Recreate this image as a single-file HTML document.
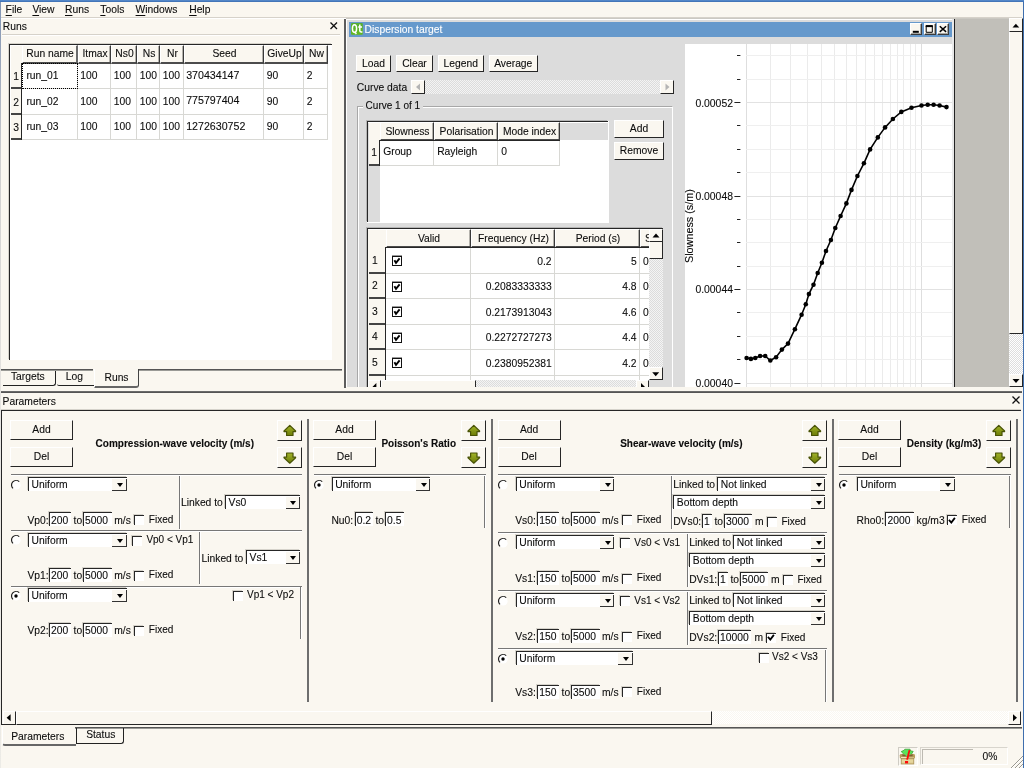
<!DOCTYPE html>
<html><head><meta charset="utf-8"><title>Dispersion</title>
<style>
html,body{margin:0;padding:0}
body{width:1024px;height:768px;overflow:hidden;background:#faf7f0;position:relative;font-family:"Liberation Sans",sans-serif;font-size:10.3px;color:#0c0c0c;-webkit-text-stroke:0.1px}
#w{position:absolute;left:0;top:0;width:1024px;height:768px;will-change:transform}
.a{position:absolute;box-sizing:border-box}
.t{line-height:12px;white-space:nowrap}
u{text-decoration:underline;text-underline-offset:1.5px;text-decoration-thickness:1px}
.btn{background:#faf7f0;border-top:1px solid #fff;border-left:1px solid #fff;border-right:1px solid #262626;border-bottom:1px solid #262626;text-align:center;white-space:nowrap;overflow:hidden}
.btn svg{display:block}
.hd{background:#faf7f0;border-left:1px solid #fff;border-top:1px solid #fff;border-right:1px solid #3a3a3a;box-shadow:inset -1px 0 0 #b4b2ac;border-bottom:2px solid #4c4c4c;text-align:center;line-height:17px;padding-left:1px;white-space:nowrap;overflow:hidden}
.rh{background:#faf7f0;border-bottom:2px solid #444;text-align:center;overflow:hidden}
.cell{background:#fff;border-right:1px solid #d8d8d4;border-bottom:1px solid #d8d8d4;padding-left:2.8px;white-space:nowrap}
.cell.r{text-align:right;padding-right:2.4px;padding-left:0}
.tab{text-align:center;line-height:12.5px;border-right:1px solid #222;border-bottom:1px solid #222;border-radius:0 0 3px 0}
.tab.nr{border-right:none;border-radius:0 0 0 2px}
.tab.sel{border-right:1.5px solid #444;border-bottom:2px solid #666;border-left:1px solid #fff}
.tab.b2{border-left:1px solid #222}
.combo{background:#fff;border-top:1px solid #262626;border-left:1px solid #262626;box-shadow:-1px -1px 0 #d6d3cb}
.combo span{position:absolute;left:2.8px;top:-.2px;line-height:12px;white-space:nowrap}
.combo i{position:absolute;right:0;top:1px;width:13.5px;bottom:0;background:#faf7f0;border-right:1.5px solid #333;border-bottom:1.5px solid #333}
.combo b{position:absolute;right:3.6px;top:5px;width:0;height:0;border-left:3.5px solid transparent;border-right:3.5px solid transparent;border-top:4px solid #000}
.inp{background:#fff;border-top:1px solid #262626;border-left:1px solid #262626;box-shadow:-1px -1px 0 #d6d3cb;line-height:14.4px;padding-left:1.2px;white-space:nowrap;overflow:hidden}
.chk{width:10px;height:10px;background:#fff;border-top:1px solid #262626;border-left:1px solid #262626;box-shadow:-1px -1px 0 #d6d3cb}
.chk svg{position:absolute;left:-.5px;top:-.5px}
.tchk{width:10px;height:10px;background:#fff;border:1px solid #111;box-shadow:0 -1px 0 #999}
.tchk svg{position:absolute;left:-1px;top:-1px}
.dith{background-image:conic-gradient(#fff 25%,#dedede 0 50%,#fff 0 75%,#dedede 0);background-size:2px 2px}
.dith2{background-image:conic-gradient(#f4f4f4 25%,#dcdcdc 0 50%,#f4f4f4 0 75%,#dcdcdc 0);background-size:2px 2px}
.dith3{background-image:conic-gradient(#fff 25%,#faf7f0 0 50%,#fff 0 75%,#faf7f0 0);background-size:2px 2px}
</style></head>
<body>
<div id="w">
<div class="a " style="left:0px;top:0px;width:1024px;height:2px;background:linear-gradient(#5a8fd0,#3b6db0)"></div>
<div class="a " style="left:0px;top:2px;width:1px;height:766px;background:linear-gradient(#8094b4 0,#9aa6ba 60px,#cfcfcf 160px,#e6e4e0 400px,#ecebe6 100%)"></div>
<div class="a " style="left:1023px;top:2px;width:1px;height:766px;background:#3f6fae"></div>
<div class="a t " style="left:5.6px;top:4px;"><u>F</u>ile</div>
<div class="a t " style="left:32.4px;top:4px;"><u>V</u>iew</div>
<div class="a t " style="left:65px;top:4px;"><u>R</u>uns</div>
<div class="a t " style="left:100.3px;top:4px;"><u>T</u>ools</div>
<div class="a t " style="left:135.6px;top:4px;"><u>W</u>indows</div>
<div class="a t " style="left:189.2px;top:4px;"><u>H</u>elp</div>
<div class="a " style="left:1px;top:17px;width:1021px;height:1px;background:#d6d2ca"></div>
<div class="a " style="left:1px;top:18px;width:1021px;height:1px;background:#ffffff"></div>
<div class="a t " style="left:2.8px;top:21px;">Runs</div>
<svg class="a" style="left:329px;top:21px" width="10" height="10" viewBox="0 0 10 10"><path d="M1.5 1.5 L8 8 M8 1.5 L1.5 8" stroke="#111" stroke-width="1.3" fill="none"/></svg>
<div class="a " style="left:2px;top:34px;width:338px;height:1px;background:#d6d2ca"></div>
<div class="a " style="left:2px;top:35px;width:338px;height:1px;background:#ffffff"></div>
<div class="a " style="left:9px;top:44px;width:323px;height:316px;background:#fff;border-top:1px solid #262626;border-left:1px solid #262626;box-shadow:-1px -1px 0 #d6d3cb"></div>
<div class="a " style="left:11px;top:46px;width:11px;height:93px;background:#faf7f0"></div>
<div class="a hd" style="left:22px;top:45px;width:56px;height:19px;line-height:16px;border-right:2px solid #6a6a6a;box-shadow:none">Run name</div>
<div class="a hd" style="left:78px;top:45px;width:33px;height:19px;line-height:16px">Itmax</div>
<div class="a hd" style="left:111px;top:45px;width:26px;height:19px;line-height:16px">Ns0</div>
<div class="a hd" style="left:137px;top:45px;width:23px;height:19px;line-height:16px">Ns</div>
<div class="a hd" style="left:160px;top:45px;width:24px;height:19px;line-height:16px">Nr</div>
<div class="a hd" style="left:184px;top:45px;width:80px;height:19px;line-height:16px">Seed</div>
<div class="a hd" style="left:264px;top:45px;width:40px;height:19px;line-height:16px">GiveUp</div>
<div class="a hd" style="left:304px;top:45px;width:24px;height:19px;line-height:16px">Nw</div>
<div class="a rh" style="left:11px;top:64px;width:10px;height:25px;line-height:26px">1</div>
<div class="a cell" style="left:22px;top:64px;width:56px;height:25px;line-height:24.5px;padding-left:4.4px;">run_01</div>
<div class="a cell" style="left:78px;top:64px;width:33px;height:25px;line-height:24.5px;padding-left:2.2px;">100</div>
<div class="a cell" style="left:111px;top:64px;width:26px;height:25px;line-height:24.5px;">100</div>
<div class="a cell" style="left:137px;top:64px;width:23px;height:25px;line-height:24.5px;">100</div>
<div class="a cell" style="left:160px;top:64px;width:24px;height:25px;line-height:24.5px;">100</div>
<div class="a cell" style="left:184px;top:64px;width:80px;height:25px;line-height:24.5px;padding-left:2.2px;font-size:10.65px;line-height:22.5px;">370434147</div>
<div class="a cell" style="left:264px;top:64px;width:40px;height:25px;line-height:24.5px;">90</div>
<div class="a cell" style="left:304px;top:64px;width:24px;height:25px;line-height:24.5px;">2</div>
<div class="a rh" style="left:11px;top:89px;width:10px;height:26px;line-height:27px">2</div>
<div class="a cell" style="left:22px;top:89px;width:56px;height:26px;line-height:25.5px;padding-left:4.4px;">run_02</div>
<div class="a cell" style="left:78px;top:89px;width:33px;height:26px;line-height:25.5px;padding-left:2.2px;">100</div>
<div class="a cell" style="left:111px;top:89px;width:26px;height:26px;line-height:25.5px;">100</div>
<div class="a cell" style="left:137px;top:89px;width:23px;height:26px;line-height:25.5px;">100</div>
<div class="a cell" style="left:160px;top:89px;width:24px;height:26px;line-height:25.5px;">100</div>
<div class="a cell" style="left:184px;top:89px;width:80px;height:26px;line-height:25.5px;padding-left:2.2px;font-size:10.65px;line-height:23.5px;">775797404</div>
<div class="a cell" style="left:264px;top:89px;width:40px;height:26px;line-height:25.5px;">90</div>
<div class="a cell" style="left:304px;top:89px;width:24px;height:26px;line-height:25.5px;">2</div>
<div class="a rh" style="left:11px;top:115px;width:10px;height:25px;line-height:26px">3</div>
<div class="a cell" style="left:22px;top:115px;width:56px;height:25px;line-height:24.5px;padding-left:4.4px;">run_03</div>
<div class="a cell" style="left:78px;top:115px;width:33px;height:25px;line-height:24.5px;padding-left:2.2px;">100</div>
<div class="a cell" style="left:111px;top:115px;width:26px;height:25px;line-height:24.5px;">100</div>
<div class="a cell" style="left:137px;top:115px;width:23px;height:25px;line-height:24.5px;">100</div>
<div class="a cell" style="left:160px;top:115px;width:24px;height:25px;line-height:24.5px;">100</div>
<div class="a cell" style="left:184px;top:115px;width:80px;height:25px;line-height:24.5px;padding-left:2.2px;font-size:10.65px;line-height:22.5px;">1272630752</div>
<div class="a cell" style="left:264px;top:115px;width:40px;height:25px;line-height:24.5px;">90</div>
<div class="a cell" style="left:304px;top:115px;width:24px;height:25px;line-height:24.5px;">2</div>
<div class="a " style="left:21px;top:63px;width:1px;height:77px;background:#262626"></div>
<div class="a " style="left:22px;top:63px;width:56px;height:26px;border:1px dotted #000"></div>
<div class="a " style="left:1px;top:369px;width:92px;height:1px;background:#555"></div>
<div class="a " style="left:1px;top:370px;width:92px;height:1px;background:#9a9a96"></div>
<div class="a " style="left:139px;top:369px;width:203px;height:1px;background:#555"></div>
<div class="a " style="left:139px;top:370px;width:203px;height:1px;background:#9a9a96"></div>
<div class="a tab" style="left:3px;top:371px;width:53px;height:15px;padding-right:2.4px">Targets</div>
<div class="a tab nr" style="left:57px;top:371px;width:37px;height:15px;padding-right:2.4px">Log</div>
<div class="a tab sel" style="left:94px;top:369px;width:45px;height:19px;line-height:17px">Runs</div>
<div class="a " style="left:344px;top:19px;width:2px;height:369px;background:#5c5c5c"></div>
<div class="a " style="left:346px;top:18px;width:663px;height:369px;background:#c1bfb9"></div>
<div class="a " style="left:346px;top:18px;width:663px;height:1px;background:#cbc9c3"></div>
<div class="a " style="left:346px;top:19px;width:608px;height:368px;background:#dcdcdc;border-left:1px solid #fff;border-top:1px solid #fff"></div>
<div class="a " style="left:954px;top:19px;width:1px;height:368px;background:#222"></div>
<div class="a " style="left:349px;top:22px;width:603px;height:15px;background:#6699cc"></div>
<svg class="a" style="left:350.7px;top:23.4px" width="12" height="12" viewBox="0 0 12 12"><defs><linearGradient id="qg" x1="0" y1="0" x2="0" y2="1"><stop offset="0" stop-color="#57ae32"/><stop offset="1" stop-color="#62b81c"/></linearGradient></defs><rect x="0" y="0" width="11.8" height="11.8" rx="1" fill="url(#qg)"/><ellipse cx="3.5" cy="5.6" rx="2.1" ry="3.8" fill="none" stroke="#fff" stroke-width="1.5"/><path d="M3.6 8.6 L5.4 11" stroke="#fff" stroke-width="1.4" fill="none"/><path d="M8.8 1.4 V7.8 Q8.8 9 10.2 9 H11.4 M7.2 3.9 H11" stroke="#fff" stroke-width="1.5" fill="none"/></svg>
<div class="a t " style="left:364.6px;top:24px;color:#fff">Dispersion target</div>
<div class="a btn" style="left:910.2px;top:23px;width:11.4px;height:12px;border-right-color:#3c3c3c;border-bottom-color:#3c3c3c;box-shadow:inset -1px -1px 0 #a8a6a0"><svg width="11" height="11" viewBox="0 0 11 11" style="position:absolute;left:0;top:0"><path d="M1.8 7.8 H7.8" stroke="#000" stroke-width="2"/></svg></div>
<div class="a btn" style="left:924.2px;top:23px;width:11.4px;height:12px;border-right-color:#3c3c3c;border-bottom-color:#3c3c3c;box-shadow:inset -1px -1px 0 #a8a6a0"><svg width="11" height="11" viewBox="0 0 11 11" style="position:absolute;left:0;top:0"><path d="M1.2 2 H7.3 V8.3 H1.2 Z" fill="none" stroke="#000" stroke-width="1"/><path d="M0.7 2.1 H7.8" stroke="#000" stroke-width="2"/></svg></div>
<div class="a btn" style="left:937.4px;top:23px;width:11.4px;height:12px;border-right-color:#3c3c3c;border-bottom-color:#3c3c3c;box-shadow:inset -1px -1px 0 #a8a6a0"><svg width="11" height="11" viewBox="0 0 11 11" style="position:absolute;left:0;top:0"><path d="M1.8 2.3 L8.1 7.9 M8.1 2.3 L1.8 7.9" stroke="#000" stroke-width="1.5"/></svg></div>
<div class="a " style="left:952px;top:19px;width:2px;height:368px;background:#e9e9e9"></div>
<div class="a " style="left:1009px;top:18px;width:14px;height:369px;background:#faf7f0"></div>
<div class="a dith" style="left:1009px;top:334px;width:14px;height:40px;"></div>
<div class="a btn" style="left:1009px;top:18px;width:14px;height:14px;line-height:12px;"><svg width="13" height="12" viewBox="0 0 13 12" style="position:absolute;left:-1px;top:0"><path d="M3.5 8.6 L6.9 4.8 L10.3 8.6 Z" fill="#000"/></svg></div>
<div class="a " style="left:1009px;top:32px;width:14px;height:302px;background:#faf7f0;border-left:1px solid #fff;border-right:1px solid #262626;border-bottom:1px solid #262626"></div>
<div class="a btn" style="left:1009px;top:374px;width:14px;height:13px;line-height:11px;"><svg width="13" height="11" viewBox="0 0 13 11" style="position:absolute;left:-1px;top:0"><path d="M3.5 4 L10.5 4 L7 8 Z" fill="#000"/></svg></div>
<div class="a btn" style="left:356px;top:55px;width:35px;height:17px;line-height:15px;">Load</div>
<div class="a btn" style="left:396px;top:55px;width:37px;height:17px;line-height:15px;">Clear</div>
<div class="a btn" style="left:437.5px;top:55px;width:46.5px;height:17px;line-height:15px;">Legend</div>
<div class="a btn" style="left:489px;top:55px;width:48.5px;height:17px;line-height:15px;">Average</div>
<div class="a t " style="left:356.8px;top:82px;">Curve data</div>
<div class="a dith2" style="left:425px;top:80px;width:235px;height:14px;"></div>
<div class="a btn" style="left:411px;top:80px;width:14px;height:14px;line-height:12px;"><svg width="12" height="12" viewBox="0 0 12 12" style="position:absolute;left:0;top:0"><path d="M8 2.5 L8 9.5 L4 6 Z" fill="#b4b4b4"/></svg></div>
<div class="a btn" style="left:660px;top:80px;width:14px;height:14px;line-height:12px;"><svg width="12" height="12" viewBox="0 0 12 12" style="position:absolute;left:0;top:0"><path d="M4.5 2.5 L4.5 9.5 L8.5 6 Z" fill="#b4b4b4"/></svg></div>
<div class="a " style="left:357px;top:106px;width:316px;height:285px;border:1px solid #a8a8a8;border-right-color:#fff;box-shadow:inset 1px 1px 0 #fff"></div>
<div class="a " style="left:363px;top:99px;width:59.5px;height:12px;background:#dcdcdc"></div>
<div class="a t " style="left:365.6px;top:100px;font-size:10px">Curve 1 of 1</div>
<div class="a " style="left:367px;top:121px;width:241px;height:101px;background:#fff;border-top:1px solid #262626;border-left:1px solid #262626;box-shadow:-1px -1px 0 #b4b4b4"></div>
<div class="a " style="left:608px;top:121px;width:1px;height:102px;background:#fff"></div>
<div class="a " style="left:367px;top:222px;width:242px;height:1px;background:#fff"></div>
<div class="a " style="left:369px;top:123px;width:239px;height:17px;background:#dcdcdc"></div>
<div class="a " style="left:368px;top:123px;width:12px;height:99px;background:#dcdcdc"></div>
<div class="a " style="left:369px;top:123px;width:11px;height:43px;background:#faf7f0"></div>
<div class="a hd" style="left:380px;top:122px;width:54px;height:19px;">Slowness</div>
<div class="a hd" style="left:434px;top:122px;width:64px;height:19px;">Polarisation</div>
<div class="a hd" style="left:498px;top:122px;width:62px;height:19px;">Mode index</div>
<div class="a rh" style="left:369px;top:141px;width:10px;height:25px;line-height:24px">1</div>
<div class="a cell" style="left:380px;top:141px;width:54px;height:25px;line-height:22.5px;padding-left:3.2px">Group</div>
<div class="a cell" style="left:434px;top:141px;width:64px;height:25px;line-height:22.5px;padding-left:3.2px">Rayleigh</div>
<div class="a cell" style="left:498px;top:141px;width:62px;height:25px;line-height:22.5px;padding-left:3.2px">0</div>
<div class="a " style="left:379px;top:140px;width:1px;height:26px;background:#262626"></div>
<div class="a " style="left:380px;top:140px;width:180px;height:1px;background:#262626"></div>
<div class="a btn" style="left:614px;top:120px;width:50px;height:18px;line-height:16px;">Add</div>
<div class="a btn" style="left:614px;top:142px;width:50px;height:18px;line-height:16px;">Remove</div>
<div class="a " style="left:367px;top:228px;width:295.5px;height:160px;background:#fff;border-top:1px solid #262626;border-left:1px solid #262626;box-shadow:-1px -1px 0 #b4b4b4"></div>
<div class="a " style="left:369px;top:230px;width:280px;height:18px;background:#faf7f0"></div>
<div class="a " style="left:368px;top:230px;width:17px;height:150px;background:#faf7f0"></div>
<div class="a hd" style="left:386px;top:229px;width:85px;height:19px;">Valid</div>
<div class="a hd" style="left:471px;top:229px;width:84px;height:19px;">Frequency (Hz)</div>
<div class="a hd" style="left:555px;top:229px;width:85px;height:19px;">Period (s)</div>
<div class="a hd" style="left:640px;top:229px;width:10px;height:19px;border-right:none;text-align:left;text-indent:3px">S</div>
<div class="a rh" style="left:369px;top:248px;width:16px;height:26px;line-height:25px;text-indent:3px;text-align:left">1</div>
<div class="a cell" style="left:386px;top:248px;width:85px;height:26px"></div>
<div class="a cell r" style="left:471px;top:248px;width:84px;height:26px;line-height:27.5px">0.2</div>
<div class="a cell r" style="left:555px;top:248px;width:85px;height:26px;line-height:27.5px">5</div>
<div class="a cell" style="left:640px;top:248px;width:9px;height:26px;line-height:27.5px;border-right:none;overflow:hidden;padding-left:3px">0</div>
<div class="a tchk" style="left:392px;top:256px"><svg viewBox="0 0 10 10" width="10" height="10"><path d="M2.4 4.2 L4 6.8 L7.6 2.4" fill="none" stroke="#000" stroke-width="1.9"/></svg></div>
<div class="a rh" style="left:369px;top:274px;width:16px;height:25px;line-height:24px;text-indent:3px;text-align:left">2</div>
<div class="a cell" style="left:386px;top:274px;width:85px;height:25px"></div>
<div class="a cell r" style="left:471px;top:274px;width:84px;height:25px;line-height:26.5px">0.2083333333</div>
<div class="a cell r" style="left:555px;top:274px;width:85px;height:25px;line-height:26.5px">4.8</div>
<div class="a cell" style="left:640px;top:274px;width:9px;height:25px;line-height:26.5px;border-right:none;overflow:hidden;padding-left:3px">0</div>
<div class="a tchk" style="left:392px;top:282px"><svg viewBox="0 0 10 10" width="10" height="10"><path d="M2.4 4.2 L4 6.8 L7.6 2.4" fill="none" stroke="#000" stroke-width="1.9"/></svg></div>
<div class="a rh" style="left:369px;top:299px;width:16px;height:26px;line-height:25px;text-indent:3px;text-align:left">3</div>
<div class="a cell" style="left:386px;top:299px;width:85px;height:26px"></div>
<div class="a cell r" style="left:471px;top:299px;width:84px;height:26px;line-height:27.5px">0.2173913043</div>
<div class="a cell r" style="left:555px;top:299px;width:85px;height:26px;line-height:27.5px">4.6</div>
<div class="a cell" style="left:640px;top:299px;width:9px;height:26px;line-height:27.5px;border-right:none;overflow:hidden;padding-left:3px">0</div>
<div class="a tchk" style="left:392px;top:307px"><svg viewBox="0 0 10 10" width="10" height="10"><path d="M2.4 4.2 L4 6.8 L7.6 2.4" fill="none" stroke="#000" stroke-width="1.9"/></svg></div>
<div class="a rh" style="left:369px;top:325px;width:16px;height:25px;line-height:24px;text-indent:3px;text-align:left">4</div>
<div class="a cell" style="left:386px;top:325px;width:85px;height:25px"></div>
<div class="a cell r" style="left:471px;top:325px;width:84px;height:25px;line-height:26.5px">0.2272727273</div>
<div class="a cell r" style="left:555px;top:325px;width:85px;height:25px;line-height:26.5px">4.4</div>
<div class="a cell" style="left:640px;top:325px;width:9px;height:25px;line-height:26.5px;border-right:none;overflow:hidden;padding-left:3px">0</div>
<div class="a tchk" style="left:392px;top:333px"><svg viewBox="0 0 10 10" width="10" height="10"><path d="M2.4 4.2 L4 6.8 L7.6 2.4" fill="none" stroke="#000" stroke-width="1.9"/></svg></div>
<div class="a rh" style="left:369px;top:350px;width:16px;height:26px;line-height:25px;text-indent:3px;text-align:left">5</div>
<div class="a cell" style="left:386px;top:350px;width:85px;height:26px"></div>
<div class="a cell r" style="left:471px;top:350px;width:84px;height:26px;line-height:27.5px">0.2380952381</div>
<div class="a cell r" style="left:555px;top:350px;width:85px;height:26px;line-height:27.5px">4.2</div>
<div class="a cell" style="left:640px;top:350px;width:9px;height:26px;line-height:27.5px;border-right:none;overflow:hidden;padding-left:3px">0</div>
<div class="a tchk" style="left:392px;top:358px"><svg viewBox="0 0 10 10" width="10" height="10"><path d="M2.4 4.2 L4 6.8 L7.6 2.4" fill="none" stroke="#000" stroke-width="1.9"/></svg></div>
<div class="a rh" style="left:369px;top:376px;width:16px;height:26px;line-height:25px;text-indent:3px;text-align:left"></div>
<div class="a cell" style="left:386px;top:376px;width:85px;height:26px"></div>
<div class="a cell r" style="left:471px;top:376px;width:84px;height:26px;line-height:27.5px"></div>
<div class="a cell r" style="left:555px;top:376px;width:85px;height:26px;line-height:27.5px"></div>
<div class="a cell" style="left:640px;top:376px;width:9px;height:26px;line-height:27.5px;border-right:none;overflow:hidden;padding-left:3px"></div>
<div class="a " style="left:385px;top:247px;width:1px;height:133px;background:#262626"></div>
<div class="a " style="left:386px;top:247px;width:263px;height:1px;background:#262626"></div>
<div class="a dith2" style="left:649px;top:229px;width:13.5px;height:151px;"></div>
<div class="a btn" style="left:649px;top:229px;width:13.5px;height:13px;line-height:11px;"><svg width="13" height="11" viewBox="0 0 13 11" style="position:absolute;left:-1px;top:0"><path d="M3.5 7.5 L7 3.5 L10.5 7.5 Z" fill="#000"/></svg></div>
<div class="a " style="left:649px;top:242px;width:13.5px;height:17px;background:#faf7f0;border-left:1px solid #fff;border-right:1px solid #262626;border-bottom:1px solid #262626"></div>
<div class="a btn" style="left:649px;top:367px;width:13.5px;height:13px;line-height:11px;"><svg width="13" height="11" viewBox="0 0 13 11" style="position:absolute;left:-1px;top:0"><path d="M3.2 4.2 L10.2 4.2 L6.7 8.2 Z" fill="#000"/></svg></div>
<div class="a dith2" style="left:368px;top:380px;width:281px;height:13px;"></div>
<div class="a btn" style="left:368px;top:380px;width:13px;height:13px;line-height:11px;"><svg width="13" height="13" viewBox="0 0 13 13" style="position:absolute;left:-1px;top:-1px"><path d="M8.4 3 L8.4 10.4 L4.6 6.7 Z" fill="#000"/></svg></div>
<div class="a " style="left:381px;top:380px;width:95px;height:13px;background:#faf7f0;border-left:1px solid #fff;border-right:1px solid #262626;border-top:1px solid #fff"></div>
<div class="a btn" style="left:636px;top:380px;width:13px;height:13px;line-height:11px;"><svg width="13" height="13" viewBox="0 0 13 13" style="position:absolute;left:-1px;top:-1px"><path d="M5 3 L5 10.4 L8.8 6.7 Z" fill="#000"/></svg></div>
<div class="a " style="left:649px;top:380px;width:13.5px;height:13px;background:#dcdcdc"></div>
<svg class="a" style="left:685px;top:44px" width="267" height="344" viewBox="685 44 267 344"><rect x="685" y="44" width="267" height="344" fill="#fff"/><rect x="746" y="44" width="1" height="344" fill="#dedede"/><rect x="770" y="44" width="1" height="344" fill="#ebebeb"/><rect x="790" y="44" width="1" height="344" fill="#ebebeb"/><rect x="807" y="44" width="1" height="344" fill="#ebebeb"/><rect x="821" y="44" width="1" height="344" fill="#ebebeb"/><rect x="834" y="44" width="1" height="344" fill="#ebebeb"/><rect x="846" y="44" width="1" height="344" fill="#ebebeb"/><rect x="856" y="44" width="1" height="344" fill="#ebebeb"/><rect x="865" y="44" width="1" height="344" fill="#ebebeb"/><rect x="874" y="44" width="1" height="344" fill="#ebebeb"/><rect x="882" y="44" width="1" height="344" fill="#ebebeb"/><rect x="890" y="44" width="1" height="344" fill="#ebebeb"/><rect x="897" y="44" width="1" height="344" fill="#ebebeb"/><rect x="903" y="44" width="1" height="344" fill="#ebebeb"/><rect x="910" y="44" width="1" height="344" fill="#ebebeb"/><rect x="915" y="44" width="1" height="344" fill="#ebebeb"/><rect x="921" y="44" width="1" height="344" fill="#dedede"/><rect x="746" y="55" width="206" height="1" fill="#efefef"/><rect x="737" y="55" width="3.4" height="1" fill="#222"/><rect x="746" y="79" width="206" height="1" fill="#efefef"/><rect x="737" y="79" width="3.4" height="1" fill="#222"/><rect x="746" y="102" width="206" height="1" fill="#e2e2e2"/><rect x="734.4" y="102" width="6.0" height="1" fill="#222"/><rect x="746" y="125" width="206" height="1" fill="#efefef"/><rect x="737" y="125" width="3.4" height="1" fill="#222"/><rect x="746" y="149" width="206" height="1" fill="#efefef"/><rect x="737" y="149" width="3.4" height="1" fill="#222"/><rect x="746" y="172" width="206" height="1" fill="#efefef"/><rect x="737" y="172" width="3.4" height="1" fill="#222"/><rect x="746" y="196" width="206" height="1" fill="#e2e2e2"/><rect x="734.4" y="196" width="6.0" height="1" fill="#222"/><rect x="746" y="219" width="206" height="1" fill="#efefef"/><rect x="737" y="219" width="3.4" height="1" fill="#222"/><rect x="746" y="242" width="206" height="1" fill="#efefef"/><rect x="737" y="242" width="3.4" height="1" fill="#222"/><rect x="746" y="266" width="206" height="1" fill="#efefef"/><rect x="737" y="266" width="3.4" height="1" fill="#222"/><rect x="746" y="289" width="206" height="1" fill="#e2e2e2"/><rect x="734.4" y="289" width="6.0" height="1" fill="#222"/><rect x="746" y="312" width="206" height="1" fill="#efefef"/><rect x="737" y="312" width="3.4" height="1" fill="#222"/><rect x="746" y="336" width="206" height="1" fill="#efefef"/><rect x="737" y="336" width="3.4" height="1" fill="#222"/><rect x="746" y="359" width="206" height="1" fill="#efefef"/><rect x="737" y="359" width="3.4" height="1" fill="#222"/><rect x="746" y="383" width="206" height="1" fill="#e2e2e2"/><rect x="734.4" y="383" width="6.0" height="1" fill="#222"/><polyline fill="none" stroke="#000" stroke-width="1.6" points="746.6,358.0 750.9,358.9 755.3,358.0 760.1,356.0 765.2,356.0 770.3,360.5 776.1,357.2 781.9,349.6 788.0,343.6 794.9,329.2 801.6,314.7 805.8,304.2 808.9,294.1 813.5,284.7 817.7,273 821.9,262.8 826.0,251.0 830.9,240 835.3,228 840.6,216 846.4,203.4 851.5,189.9 857.4,176 863.9,163.3 870.1,149.4 877.8,137.4 885.1,127.4 892.9,119 901.3,111.9 911.5,107.7 921.5,105.5 927.7,104.8 933.6,104.8 939.6,105.5 946.5,107.1"/><circle cx="746.6" cy="358.0" r="2.3" fill="#000"/><circle cx="750.9" cy="358.9" r="2.3" fill="#000"/><circle cx="755.3" cy="358.0" r="2.3" fill="#000"/><circle cx="760.1" cy="356.0" r="2.3" fill="#000"/><circle cx="765.2" cy="356.0" r="2.3" fill="#000"/><circle cx="770.3" cy="360.5" r="2.3" fill="#000"/><circle cx="776.1" cy="357.2" r="2.3" fill="#000"/><circle cx="781.9" cy="349.6" r="2.3" fill="#000"/><circle cx="788.0" cy="343.6" r="2.3" fill="#000"/><circle cx="794.9" cy="329.2" r="2.3" fill="#000"/><circle cx="801.6" cy="314.7" r="2.3" fill="#000"/><circle cx="805.8" cy="304.2" r="2.3" fill="#000"/><circle cx="808.9" cy="294.1" r="2.3" fill="#000"/><circle cx="813.5" cy="284.7" r="2.3" fill="#000"/><circle cx="817.7" cy="273" r="2.3" fill="#000"/><circle cx="821.9" cy="262.8" r="2.3" fill="#000"/><circle cx="826.0" cy="251.0" r="2.3" fill="#000"/><circle cx="830.9" cy="240" r="2.3" fill="#000"/><circle cx="835.3" cy="228" r="2.3" fill="#000"/><circle cx="840.6" cy="216" r="2.3" fill="#000"/><circle cx="846.4" cy="203.4" r="2.3" fill="#000"/><circle cx="851.5" cy="189.9" r="2.3" fill="#000"/><circle cx="857.4" cy="176" r="2.3" fill="#000"/><circle cx="863.9" cy="163.3" r="2.3" fill="#000"/><circle cx="870.1" cy="149.4" r="2.3" fill="#000"/><circle cx="877.8" cy="137.4" r="2.3" fill="#000"/><circle cx="885.1" cy="127.4" r="2.3" fill="#000"/><circle cx="892.9" cy="119" r="2.3" fill="#000"/><circle cx="901.3" cy="111.9" r="2.3" fill="#000"/><circle cx="911.5" cy="107.7" r="2.3" fill="#000"/><circle cx="921.5" cy="105.5" r="2.3" fill="#000"/><circle cx="927.7" cy="104.8" r="2.3" fill="#000"/><circle cx="933.6" cy="104.8" r="2.3" fill="#000"/><circle cx="939.6" cy="105.5" r="2.3" fill="#000"/><circle cx="946.5" cy="107.1" r="2.3" fill="#000"/></svg>
<div class="a t " style="left:695.4px;top:98px;font-size:10.4px">0.00052</div>
<div class="a t " style="left:695.4px;top:191px;font-size:10.4px">0.00048</div>
<div class="a t " style="left:695.4px;top:284px;font-size:10.4px">0.00044</div>
<div class="a t " style="left:695.4px;top:378px;font-size:10.4px">0.00040</div>
<div class="a t" style="left:683.4px;top:263px;width:12px;height:12px;transform:rotate(-90deg);transform-origin:0 0;white-space:nowrap;font-size:10.8px">Slowness (s/m)</div>
<div class="a " style="left:346px;top:387px;width:677px;height:22px;background:#faf7f0"></div>
<div class="a " style="left:1px;top:391px;width:1021px;height:1px;background:#6a6a6a"></div>
<div class="a " style="left:1px;top:392px;width:1021px;height:1px;background:#555"></div>
<div class="a t " style="left:2.6px;top:396px;">Parameters</div>
<svg class="a" style="left:1011px;top:395px" width="10" height="10" viewBox="0 0 10 10"><path d="M1.5 1.5 L8.5 8.5 M8.5 1.5 L1.5 8.5" stroke="#111" stroke-width="1.3" fill="none"/></svg>
<div class="a " style="left:1px;top:410px;width:1020px;height:1px;background:#262626"></div>
<div class="a " style="left:1px;top:409px;width:1020px;height:1px;background:#d6d3cb"></div>
<div class="a " style="left:1px;top:410px;width:1px;height:315px;background:#262626"></div>
<div class="a btn" style="left:10px;top:420px;width:63px;height:20px;line-height:18px;">Add</div>
<div class="a btn" style="left:10px;top:447px;width:63px;height:20px;line-height:18px;">Del</div>
<div class="a t " style="left:95.6px;top:438px;font-weight:bold;font-size:10px">Compression-wave velocity (m/s)</div>
<div class="a btn" style="left:277px;top:419.5px;width:25px;height:21px"><svg width="25" height="21" viewBox="0 0 25 21" style="position:absolute;left:-1px;top:-1px"><defs><linearGradient id="g277419" x1="0" y1="0" x2="0" y2="1"><stop offset="0" stop-color="#a2b428"/><stop offset="1" stop-color="#6c7c06"/></linearGradient></defs><path d="M12.8 5.4 L18.6 11 L18.6 11.6 L16 11.6 L16 15.5 L9.6 15.5 L9.6 11.6 L7 11.6 L7 11 Z" fill="url(#g277419)" stroke="#495306" stroke-width="1.2" stroke-linejoin="round"/></svg></div>
<div class="a btn" style="left:277px;top:446.5px;width:25px;height:21px"><svg width="25" height="21" viewBox="0 0 25 21" style="position:absolute;left:-1px;top:-1px"><defs><linearGradient id="g277446" x1="0" y1="0" x2="0" y2="1"><stop offset="0" stop-color="#a2b428"/><stop offset="1" stop-color="#6c7c06"/></linearGradient></defs><path d="M9.6 6 L16 6 L16 10.2 L18.6 10.2 L18.6 10.8 L12.8 16.2 L7 10.8 L7 10.2 L9.6 10.2 Z" fill="url(#g277446)" stroke="#495306" stroke-width="1.2" stroke-linejoin="round"/></svg></div>
<div class="a " style="left:306.7px;top:419px;width:2px;height:283px;background:#6e6e6e"></div>
<div class="a " style="left:11px;top:474px;width:291px;height:1px;background:#777"></div>
<div class="a " style="left:11px;top:475px;width:291px;height:1px;background:#fff"></div>
<svg class="a" style="left:9.6px;top:479px" width="12" height="12" viewBox="0 0 12 12"><circle cx="6.2" cy="6.2" r="4.4" fill="#fff"/><path d="M3.0 9.4 A4.5 4.5 0 0 1 9.2 2.7" fill="none" stroke="#1a1a1a" stroke-width="1.15"/></svg>
<div class="a combo" style="left:28px;top:477px;width:98.5px;height:14px"><i></i><b></b></div>
<div class="a t " style="left:31.6px;top:479px;">Uniform</div>
<div class="a t " style="left:27.4px;top:515px;">Vp0:</div>
<div class="a inp" style="left:49px;top:512.4px;width:22px;height:14px"></div>
<div class="a t " style="left:51.1px;top:515px;">200</div>
<div class="a t " style="left:73.6px;top:515px;">to</div>
<div class="a inp" style="left:83px;top:512.4px;width:28.5px;height:14px"></div>
<div class="a t " style="left:85.1px;top:515px;">5000</div>
<div class="a t " style="left:114.2px;top:515px;">m/s</div>
<div class="a chk" style="left:134px;top:515.0px"></div>
<div class="a t " style="left:148.8px;top:514px;font-size:10px">Fixed</div>
<div class="a " style="left:11px;top:530px;width:291px;height:1px;background:#777"></div>
<div class="a " style="left:11px;top:531px;width:291px;height:1px;background:#fff"></div>
<svg class="a" style="left:9.6px;top:534px" width="12" height="12" viewBox="0 0 12 12"><circle cx="6.2" cy="6.2" r="4.4" fill="#fff"/><path d="M3.0 9.4 A4.5 4.5 0 0 1 9.2 2.7" fill="none" stroke="#1a1a1a" stroke-width="1.15"/></svg>
<div class="a combo" style="left:28px;top:532.6px;width:98.5px;height:14px"><i></i><b></b></div>
<div class="a t " style="left:31.6px;top:535px;">Uniform</div>
<div class="a t " style="left:27.4px;top:570px;">Vp1:</div>
<div class="a inp" style="left:49px;top:568px;width:22px;height:14px"></div>
<div class="a t " style="left:51.1px;top:570px;">200</div>
<div class="a t " style="left:73.6px;top:570px;">to</div>
<div class="a inp" style="left:83px;top:568px;width:28.5px;height:14px"></div>
<div class="a t " style="left:85.1px;top:570px;">5000</div>
<div class="a t " style="left:114.2px;top:570px;">m/s</div>
<div class="a chk" style="left:134px;top:570.6px"></div>
<div class="a t " style="left:148.8px;top:569px;font-size:10px">Fixed</div>
<div class="a " style="left:11px;top:586px;width:291px;height:1px;background:#777"></div>
<div class="a " style="left:11px;top:587px;width:291px;height:1px;background:#fff"></div>
<svg class="a" style="left:9.6px;top:589.6px" width="12" height="12" viewBox="0 0 12 12"><circle cx="6.2" cy="6.2" r="4.4" fill="#fff"/><path d="M3.0 9.4 A4.5 4.5 0 0 1 9.2 2.7" fill="none" stroke="#1a1a1a" stroke-width="1.15"/><circle cx="6" cy="6" r="1.7" fill="#000"/></svg>
<div class="a combo" style="left:28px;top:588px;width:98.5px;height:14px"><i></i><b></b></div>
<div class="a t " style="left:31.6px;top:590px;">Uniform</div>
<div class="a t " style="left:27.4px;top:625px;">Vp2:</div>
<div class="a inp" style="left:49px;top:623px;width:22px;height:14px"></div>
<div class="a t " style="left:51.1px;top:625px;">200</div>
<div class="a t " style="left:73.6px;top:625px;">to</div>
<div class="a inp" style="left:83px;top:623px;width:28.5px;height:14px"></div>
<div class="a t " style="left:85.1px;top:625px;">5000</div>
<div class="a t " style="left:114.2px;top:625px;">m/s</div>
<div class="a chk" style="left:134px;top:625.6px"></div>
<div class="a t " style="left:148.8px;top:624px;font-size:10px">Fixed</div>
<div class="a " style="left:179px;top:476px;width:1px;height:53px;background:#777"></div>
<div class="a " style="left:180px;top:476px;width:1px;height:53px;background:#fff"></div>
<div class="a t " style="left:181px;top:497px;">Linked to</div>
<div class="a combo" style="left:225px;top:495px;width:75px;height:14px"><i></i><b></b></div>
<div class="a t " style="left:228.6px;top:497px;">Vs0</div>
<div class="a chk" style="left:132px;top:535.5px"></div>
<div class="a t " style="left:146.4px;top:534px;font-size:10px">Vp0 &lt; Vp1</div>
<div class="a " style="left:199px;top:532px;width:1px;height:52px;background:#777"></div>
<div class="a " style="left:200px;top:532px;width:1px;height:52px;background:#fff"></div>
<div class="a t " style="left:201.5px;top:553px;">Linked to</div>
<div class="a combo" style="left:246px;top:550.4px;width:54px;height:14px"><i></i><b></b></div>
<div class="a t " style="left:249.6px;top:552px;">Vs1</div>
<div class="a chk" style="left:233px;top:590.8px"></div>
<div class="a t " style="left:247px;top:589px;font-size:10px">Vp1 &lt; Vp2</div>
<div class="a " style="left:300px;top:587px;width:1px;height:52px;background:#777"></div>
<div class="a " style="left:301px;top:587px;width:1px;height:52px;background:#fff"></div>
<div class="a btn" style="left:313px;top:420px;width:63px;height:20px;line-height:18px;">Add</div>
<div class="a btn" style="left:313px;top:447px;width:63px;height:20px;line-height:18px;">Del</div>
<div class="a t " style="left:381.4px;top:438px;font-weight:bold;font-size:10px">Poisson's Ratio</div>
<div class="a btn" style="left:461px;top:419.5px;width:25px;height:21px"><svg width="25" height="21" viewBox="0 0 25 21" style="position:absolute;left:-1px;top:-1px"><defs><linearGradient id="g461419" x1="0" y1="0" x2="0" y2="1"><stop offset="0" stop-color="#a2b428"/><stop offset="1" stop-color="#6c7c06"/></linearGradient></defs><path d="M12.8 5.4 L18.6 11 L18.6 11.6 L16 11.6 L16 15.5 L9.6 15.5 L9.6 11.6 L7 11.6 L7 11 Z" fill="url(#g461419)" stroke="#495306" stroke-width="1.2" stroke-linejoin="round"/></svg></div>
<div class="a btn" style="left:461px;top:446.5px;width:25px;height:21px"><svg width="25" height="21" viewBox="0 0 25 21" style="position:absolute;left:-1px;top:-1px"><defs><linearGradient id="g461446" x1="0" y1="0" x2="0" y2="1"><stop offset="0" stop-color="#a2b428"/><stop offset="1" stop-color="#6c7c06"/></linearGradient></defs><path d="M9.6 6 L16 6 L16 10.2 L18.6 10.2 L18.6 10.8 L12.8 16.2 L7 10.8 L7 10.2 L9.6 10.2 Z" fill="url(#g461446)" stroke="#495306" stroke-width="1.2" stroke-linejoin="round"/></svg></div>
<div class="a " style="left:491.4px;top:419px;width:2px;height:283px;background:#6e6e6e"></div>
<div class="a " style="left:314px;top:474px;width:172px;height:1px;background:#777"></div>
<div class="a " style="left:314px;top:475px;width:172px;height:1px;background:#fff"></div>
<svg class="a" style="left:313px;top:479px" width="12" height="12" viewBox="0 0 12 12"><circle cx="6.2" cy="6.2" r="4.4" fill="#fff"/><path d="M3.0 9.4 A4.5 4.5 0 0 1 9.2 2.7" fill="none" stroke="#1a1a1a" stroke-width="1.15"/><circle cx="6" cy="6" r="1.7" fill="#000"/></svg>
<div class="a combo" style="left:331.6px;top:477px;width:98.6px;height:14px"><i></i><b></b></div>
<div class="a t " style="left:335.20000000000005px;top:479px;">Uniform</div>
<div class="a t " style="left:331.4px;top:515px;">Nu0:</div>
<div class="a inp" style="left:354.6px;top:512.4px;width:18.5px;height:14px"></div>
<div class="a t " style="left:356.70000000000005px;top:515px;">0.2</div>
<div class="a t " style="left:375.4px;top:515px;">to</div>
<div class="a inp" style="left:385px;top:512.4px;width:18.5px;height:14px"></div>
<div class="a t " style="left:387.1px;top:515px;">0.5</div>
<div class="a " style="left:484px;top:476px;width:1px;height:52px;background:#777"></div>
<div class="a " style="left:485px;top:476px;width:1px;height:52px;background:#fff"></div>
<div class="a btn" style="left:497.6px;top:420px;width:63px;height:20px;line-height:18px;">Add</div>
<div class="a btn" style="left:497.6px;top:447px;width:63px;height:20px;line-height:18px;">Del</div>
<div class="a t " style="left:620.2px;top:438px;font-weight:bold;font-size:10px">Shear-wave velocity (m/s)</div>
<div class="a btn" style="left:802.4px;top:419.5px;width:25px;height:21px"><svg width="25" height="21" viewBox="0 0 25 21" style="position:absolute;left:-1px;top:-1px"><defs><linearGradient id="g802419" x1="0" y1="0" x2="0" y2="1"><stop offset="0" stop-color="#a2b428"/><stop offset="1" stop-color="#6c7c06"/></linearGradient></defs><path d="M12.8 5.4 L18.6 11 L18.6 11.6 L16 11.6 L16 15.5 L9.6 15.5 L9.6 11.6 L7 11.6 L7 11 Z" fill="url(#g802419)" stroke="#495306" stroke-width="1.2" stroke-linejoin="round"/></svg></div>
<div class="a btn" style="left:802.4px;top:446.5px;width:25px;height:21px"><svg width="25" height="21" viewBox="0 0 25 21" style="position:absolute;left:-1px;top:-1px"><defs><linearGradient id="g802446" x1="0" y1="0" x2="0" y2="1"><stop offset="0" stop-color="#a2b428"/><stop offset="1" stop-color="#6c7c06"/></linearGradient></defs><path d="M9.6 6 L16 6 L16 10.2 L18.6 10.2 L18.6 10.8 L12.8 16.2 L7 10.8 L7 10.2 L9.6 10.2 Z" fill="url(#g802446)" stroke="#495306" stroke-width="1.2" stroke-linejoin="round"/></svg></div>
<div class="a " style="left:831.9px;top:419px;width:2px;height:283px;background:#6e6e6e"></div>
<div class="a " style="left:498px;top:474px;width:329px;height:1px;background:#777"></div>
<div class="a " style="left:498px;top:475px;width:329px;height:1px;background:#fff"></div>
<svg class="a" style="left:497.4px;top:479px" width="12" height="12" viewBox="0 0 12 12"><circle cx="6.2" cy="6.2" r="4.4" fill="#fff"/><path d="M3.0 9.4 A4.5 4.5 0 0 1 9.2 2.7" fill="none" stroke="#1a1a1a" stroke-width="1.15"/></svg>
<div class="a combo" style="left:515.7px;top:477px;width:98.8px;height:14px"><i></i><b></b></div>
<div class="a t " style="left:519.3000000000001px;top:479px;">Uniform</div>
<div class="a t " style="left:515.2px;top:515px;">Vs0:</div>
<div class="a inp" style="left:537.2px;top:512.4px;width:22px;height:14px"></div>
<div class="a t " style="left:539.3000000000001px;top:515px;">150</div>
<div class="a t " style="left:561.6px;top:515px;">to</div>
<div class="a inp" style="left:571px;top:512.4px;width:28.5px;height:14px"></div>
<div class="a t " style="left:573.1px;top:515px;">5000</div>
<div class="a t " style="left:602px;top:515px;">m/s</div>
<div class="a chk" style="left:622px;top:515.0px"></div>
<div class="a t " style="left:636.8px;top:514px;font-size:10px">Fixed</div>
<div class="a " style="left:671px;top:476px;width:1px;height:53px;background:#777"></div>
<div class="a " style="left:672px;top:476px;width:1px;height:53px;background:#fff"></div>
<div class="a t " style="left:673.2px;top:479px;">Linked to</div>
<div class="a combo" style="left:717.2px;top:477.2px;width:108.0px;height:14px"><i></i><b></b></div>
<div class="a t " style="left:720.8000000000001px;top:479px;">Not linked</div>
<div class="a combo" style="left:673.2px;top:495.3px;width:152.0px;height:14px"><i></i><b></b></div>
<div class="a t " style="left:676.8000000000001px;top:497px;">Bottom depth</div>
<div class="a t " style="left:673.2px;top:516px;">DVs0:</div>
<div class="a inp" style="left:702px;top:514.4px;width:10px;height:14px"></div>
<div class="a t " style="left:704.1px;top:516px;">1</div>
<div class="a t " style="left:714.4px;top:516px;">to</div>
<div class="a inp" style="left:724px;top:514.4px;width:28.4px;height:14px"></div>
<div class="a t " style="left:726.1px;top:516px;">3000</div>
<div class="a t " style="left:755px;top:516px;">m</div>
<div class="a chk" style="left:766.6px;top:516.9px"></div>
<div class="a t " style="left:781.4px;top:516px;font-size:10px">Fixed</div>
<div class="a " style="left:498px;top:532px;width:329px;height:1px;background:#777"></div>
<div class="a " style="left:498px;top:533px;width:329px;height:1px;background:#fff"></div>
<svg class="a" style="left:497.4px;top:537px" width="12" height="12" viewBox="0 0 12 12"><circle cx="6.2" cy="6.2" r="4.4" fill="#fff"/><path d="M3.0 9.4 A4.5 4.5 0 0 1 9.2 2.7" fill="none" stroke="#1a1a1a" stroke-width="1.15"/></svg>
<div class="a combo" style="left:515.7px;top:535px;width:98.8px;height:14px"><i></i><b></b></div>
<div class="a t " style="left:519.3000000000001px;top:537px;">Uniform</div>
<div class="a t " style="left:515.2px;top:573px;">Vs1:</div>
<div class="a inp" style="left:537.2px;top:571px;width:22px;height:14px"></div>
<div class="a t " style="left:539.3000000000001px;top:573px;">150</div>
<div class="a t " style="left:561.6px;top:573px;">to</div>
<div class="a inp" style="left:571px;top:571px;width:28.5px;height:14px"></div>
<div class="a t " style="left:573.1px;top:573px;">5000</div>
<div class="a t " style="left:602px;top:573px;">m/s</div>
<div class="a chk" style="left:622px;top:573.6px"></div>
<div class="a t " style="left:636.8px;top:572px;font-size:10px">Fixed</div>
<div class="a chk" style="left:620px;top:538.2px"></div>
<div class="a t " style="left:634.3px;top:537px;font-size:10px">Vs0 &lt; Vs1</div>
<div class="a " style="left:687px;top:534px;width:1px;height:53px;background:#777"></div>
<div class="a " style="left:688px;top:534px;width:1px;height:53px;background:#fff"></div>
<div class="a t " style="left:689.2px;top:537px;">Linked to</div>
<div class="a combo" style="left:733.2px;top:535.2px;width:92.0px;height:14px"><i></i><b></b></div>
<div class="a t " style="left:736.8000000000001px;top:537px;">Not linked</div>
<div class="a combo" style="left:689.2px;top:553.3px;width:136.0px;height:14px"><i></i><b></b></div>
<div class="a t " style="left:692.8000000000001px;top:555px;">Bottom depth</div>
<div class="a t " style="left:689.2px;top:574px;">DVs1:</div>
<div class="a inp" style="left:718px;top:572.4px;width:10px;height:14px"></div>
<div class="a t " style="left:720.1px;top:574px;">1</div>
<div class="a t " style="left:730.4px;top:574px;">to</div>
<div class="a inp" style="left:740px;top:572.4px;width:28.4px;height:14px"></div>
<div class="a t " style="left:742.1px;top:574px;">5000</div>
<div class="a t " style="left:771px;top:574px;">m</div>
<div class="a chk" style="left:782.6px;top:574.9px"></div>
<div class="a t " style="left:797.4px;top:574px;font-size:10px">Fixed</div>
<div class="a " style="left:498px;top:590px;width:329px;height:1px;background:#777"></div>
<div class="a " style="left:498px;top:591px;width:329px;height:1px;background:#fff"></div>
<svg class="a" style="left:497.4px;top:595px" width="12" height="12" viewBox="0 0 12 12"><circle cx="6.2" cy="6.2" r="4.4" fill="#fff"/><path d="M3.0 9.4 A4.5 4.5 0 0 1 9.2 2.7" fill="none" stroke="#1a1a1a" stroke-width="1.15"/></svg>
<div class="a combo" style="left:515.7px;top:593px;width:98.8px;height:14px"><i></i><b></b></div>
<div class="a t " style="left:519.3000000000001px;top:595px;">Uniform</div>
<div class="a t " style="left:515.2px;top:631px;">Vs2:</div>
<div class="a inp" style="left:537.2px;top:629px;width:22px;height:14px"></div>
<div class="a t " style="left:539.3000000000001px;top:631px;">150</div>
<div class="a t " style="left:561.6px;top:631px;">to</div>
<div class="a inp" style="left:571px;top:629px;width:28.5px;height:14px"></div>
<div class="a t " style="left:573.1px;top:631px;">5000</div>
<div class="a t " style="left:602px;top:631px;">m/s</div>
<div class="a chk" style="left:622px;top:631.6px"></div>
<div class="a t " style="left:636.8px;top:630px;font-size:10px">Fixed</div>
<div class="a chk" style="left:620px;top:596.2px"></div>
<div class="a t " style="left:634.3px;top:595px;font-size:10px">Vs1 &lt; Vs2</div>
<div class="a " style="left:687px;top:592px;width:1px;height:53px;background:#777"></div>
<div class="a " style="left:688px;top:592px;width:1px;height:53px;background:#fff"></div>
<div class="a t " style="left:689.2px;top:595px;">Linked to</div>
<div class="a combo" style="left:733.2px;top:593.2px;width:92.0px;height:14px"><i></i><b></b></div>
<div class="a t " style="left:736.8000000000001px;top:595px;">Not linked</div>
<div class="a combo" style="left:689.2px;top:611.3px;width:136.0px;height:14px"><i></i><b></b></div>
<div class="a t " style="left:692.8000000000001px;top:613px;">Bottom depth</div>
<div class="a t " style="left:689.2px;top:632px;">DVs2:</div>
<div class="a inp" style="left:718px;top:630.4px;width:33.4px;height:14px"></div>
<div class="a t " style="left:720.1px;top:632px;">10000</div>
<div class="a t " style="left:754.4px;top:632px;">m</div>
<div class="a chk" style="left:766px;top:632.9px"><svg viewBox="0 0 10 10" width="10" height="10"><path d="M0.9 3.9 L3.3 6.5 L6.9 1.9" fill="none" stroke="#000" stroke-width="1.8"/></svg></div>
<div class="a t " style="left:780.8px;top:632px;font-size:10px">Fixed</div>
<div class="a " style="left:498px;top:648px;width:329px;height:1px;background:#777"></div>
<div class="a " style="left:498px;top:649px;width:329px;height:1px;background:#fff"></div>
<svg class="a" style="left:497.4px;top:653px" width="12" height="12" viewBox="0 0 12 12"><circle cx="6.2" cy="6.2" r="4.4" fill="#fff"/><path d="M3.0 9.4 A4.5 4.5 0 0 1 9.2 2.7" fill="none" stroke="#1a1a1a" stroke-width="1.15"/><circle cx="6" cy="6" r="1.7" fill="#000"/></svg>
<div class="a combo" style="left:515.7px;top:651px;width:117.3px;height:14px"><i></i><b></b></div>
<div class="a t " style="left:519.3000000000001px;top:653px;">Uniform</div>
<div class="a t " style="left:515.2px;top:687px;">Vs3:</div>
<div class="a inp" style="left:537.2px;top:684.6px;width:22px;height:14px"></div>
<div class="a t " style="left:539.3000000000001px;top:687px;">150</div>
<div class="a t " style="left:561.6px;top:687px;">to</div>
<div class="a inp" style="left:571px;top:684.6px;width:28.5px;height:14px"></div>
<div class="a t " style="left:573.1px;top:687px;">3500</div>
<div class="a t " style="left:602px;top:687px;">m/s</div>
<div class="a chk" style="left:622px;top:687.2px"></div>
<div class="a t " style="left:636.8px;top:686px;font-size:10px">Fixed</div>
<div class="a chk" style="left:758.6px;top:652.8px"></div>
<div class="a t " style="left:772px;top:651px;font-size:10px">Vs2 &lt; Vs3</div>
<div class="a " style="left:825px;top:650px;width:1px;height:52px;background:#777"></div>
<div class="a " style="left:826px;top:650px;width:1px;height:52px;background:#fff"></div>
<div class="a btn" style="left:838px;top:420px;width:63px;height:20px;line-height:18px;">Add</div>
<div class="a btn" style="left:838px;top:447px;width:63px;height:20px;line-height:18px;">Del</div>
<div class="a t " style="left:906.8px;top:438px;font-weight:bold;font-size:10px">Density (kg/m3)</div>
<div class="a btn" style="left:986.2px;top:419.5px;width:25px;height:21px"><svg width="25" height="21" viewBox="0 0 25 21" style="position:absolute;left:-1px;top:-1px"><defs><linearGradient id="g986419" x1="0" y1="0" x2="0" y2="1"><stop offset="0" stop-color="#a2b428"/><stop offset="1" stop-color="#6c7c06"/></linearGradient></defs><path d="M12.8 5.4 L18.6 11 L18.6 11.6 L16 11.6 L16 15.5 L9.6 15.5 L9.6 11.6 L7 11.6 L7 11 Z" fill="url(#g986419)" stroke="#495306" stroke-width="1.2" stroke-linejoin="round"/></svg></div>
<div class="a btn" style="left:986.2px;top:446.5px;width:25px;height:21px"><svg width="25" height="21" viewBox="0 0 25 21" style="position:absolute;left:-1px;top:-1px"><defs><linearGradient id="g986446" x1="0" y1="0" x2="0" y2="1"><stop offset="0" stop-color="#a2b428"/><stop offset="1" stop-color="#6c7c06"/></linearGradient></defs><path d="M9.6 6 L16 6 L16 10.2 L18.6 10.2 L18.6 10.8 L12.8 16.2 L7 10.8 L7 10.2 L9.6 10.2 Z" fill="url(#g986446)" stroke="#495306" stroke-width="1.2" stroke-linejoin="round"/></svg></div>
<div class="a " style="left:1016.4px;top:419px;width:2px;height:283px;background:#6e6e6e"></div>
<div class="a " style="left:839px;top:474px;width:172px;height:1px;background:#777"></div>
<div class="a " style="left:839px;top:475px;width:172px;height:1px;background:#fff"></div>
<svg class="a" style="left:838.2px;top:479px" width="12" height="12" viewBox="0 0 12 12"><circle cx="6.2" cy="6.2" r="4.4" fill="#fff"/><path d="M3.0 9.4 A4.5 4.5 0 0 1 9.2 2.7" fill="none" stroke="#1a1a1a" stroke-width="1.15"/><circle cx="6" cy="6" r="1.7" fill="#000"/></svg>
<div class="a combo" style="left:856.8px;top:477px;width:98.2px;height:14px"><i></i><b></b></div>
<div class="a t " style="left:860.4px;top:479px;">Uniform</div>
<div class="a t " style="left:856.6px;top:515px;">Rho0:</div>
<div class="a inp" style="left:885.4px;top:512.4px;width:28.5px;height:14px"></div>
<div class="a t " style="left:887.5px;top:515px;">2000</div>
<div class="a t " style="left:916.6px;top:515px;">kg/m3</div>
<div class="a chk" style="left:947px;top:515px"><svg viewBox="0 0 10 10" width="10" height="10"><path d="M0.9 3.9 L3.3 6.5 L6.9 1.9" fill="none" stroke="#000" stroke-width="1.8"/></svg></div>
<div class="a t " style="left:961.8px;top:514px;font-size:10px">Fixed</div>
<div class="a " style="left:1009px;top:476px;width:1px;height:52px;background:#777"></div>
<div class="a " style="left:1010px;top:476px;width:1px;height:52px;background:#fff"></div>
<div class="a " style="left:2px;top:702px;width:1019px;height:9px;background:#faf7f0"></div>
<div class="a dith3" style="left:3px;top:711px;width:1018px;height:13px;"></div>
<div class="a btn" style="left:3px;top:711px;width:12.5px;height:13.5px;line-height:11.5px;"><svg width="11" height="12" viewBox="0 0 11 12" style="position:absolute;left:-1px;top:-1px"><path d="M7.6 3.2 L7.6 10.2 L3.6 6.7 Z" fill="#000"/></svg></div>
<div class="a " style="left:1px;top:724px;width:3px;height:1px;background:#262626"></div>
<div class="a " style="left:15.5px;top:711px;width:696.5px;height:13.5px;background:#faf7f0;border-top:1px solid #fff;border-left:1px solid #fff;border-right:1px solid #262626;border-bottom:1px solid #262626"></div>
<div class="a btn" style="left:1008px;top:711px;width:13px;height:13.5px;line-height:11.5px;"><svg width="11" height="12" viewBox="0 0 11 12" style="position:absolute;left:0;top:-1px"><path d="M4 3.2 L4 10.2 L8 6.7 Z" fill="#000"/></svg></div>
<div class="a " style="left:75px;top:727px;width:947px;height:1px;background:#555"></div>
<div class="a " style="left:75px;top:728px;width:947px;height:1px;background:#9a9a96"></div>
<div class="a tab sel" style="left:2px;top:727px;width:73.5px;height:19px;line-height:19px;border-right:none;padding-right:3px;border-radius:0 0 0 3px">Parameters</div>
<div class="a tab b2" style="left:75.5px;top:728px;width:48.5px;height:15.5px;line-height:14px;padding-left:2px">Status</div>
<div class="a " style="left:897.5px;top:746.5px;width:20.5px;height:19px;border:1px solid #cfccc4;border-right-color:#fff;border-bottom-color:#fff"></div>
<svg class="a" style="left:898px;top:747px" width="20" height="19" viewBox="0 0 20 19"><path d="M3.2 4.6 L6.2 3.2 L6.8 2.2 L12 2.2 L12.6 3.8 L15.2 4.4 L12.8 8.2 L9 9.8 L5.8 7.2 Z" fill="#5ae45a" stroke="#2f9c2f" stroke-width=".7" stroke-linejoin="round"/><path d="M1.8 8.2 Q1.8 7 3.4 7 L15.4 7 Q17 7 17 8.2 L17 10.6 Q17 11.6 16 11.6 L2.8 11.6 Q1.8 11.6 1.8 10.6 Z" fill="#b8995a"/><path d="M4 7.4 L15 7.4 L14.4 9.2 L4.6 9.2 Z" fill="#7a6234"/><path d="M5.6 6.6 L8.8 9.4 L11.8 8 L13.2 6.4 L12 4.2 L6.4 4.4 Z" fill="#5ae45a"/><rect x="3" y="10" width="6" height="1" fill="#f3e8c0"/><rect x="11" y="10" width="5" height=".9" fill="#d8c088"/><rect x="3.2" y="11.6" width="12.6" height="5.4" fill="#dcc88c" stroke="#a3894e" stroke-width=".7"/><rect x="4" y="13" width="11" height="2.6" fill="#e6d69c"/><path d="M10.6 3 L12.4 3.2 L10 12.8 L8.2 12.6 Z" fill="#ff0a0a"/><rect x="7" y="14" width="3.1" height="2.4" fill="#ff0a0a"/></svg>
<div class="a " style="left:920px;top:747px;width:87.5px;height:18px;border:1px solid #d8d5cd;border-right-color:#fff;border-bottom-color:#fff"></div>
<div class="a " style="left:921.5px;top:748.5px;width:51.5px;height:15px;border-top:1px solid #bdbab2;border-left:1px solid #bdbab2"></div>
<div class="a t " style="left:982.6px;top:751px;">0%</div>
<svg class="a" style="left:1010px;top:755px" width="13" height="13" viewBox="0 0 13 13"><path d="M13 1 L1 13 M13 5 L5 13 M13 9 L9 13" stroke="#9a9890" stroke-width="1"/><path d="M13 2 L2 13 M13 6 L6 13 M13 10 L10 13" stroke="#fff" stroke-width="1"/></svg>
</div>
</body></html>
